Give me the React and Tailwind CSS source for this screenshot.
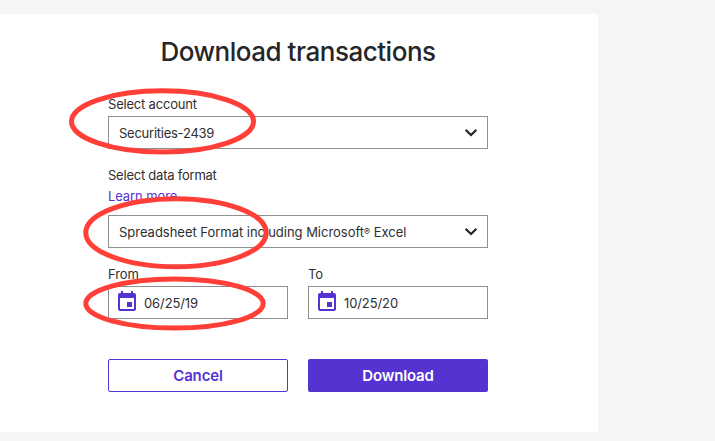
function Chevron() {
  return (
    <svg className="mr-[10px] h-3 w-3" viewBox="0 0 12 12" fill="none" stroke="#262629" strokeWidth="2.1">
      <path d="M0.6 2.8L6 8.1L11.4 2.8" />
    </svg>
  );
}

function CalendarIcon() {
  return (
    <svg className="h-6 w-6 shrink-0" viewBox="0 0 24 24" fill="#5533d1">
      <path d="M17 12h-5v5h5v-5zM16 1v2H8V1H6v2H5c-1.11 0-1.99.9-1.99 2L3 19c0 1.1.89 2 2 2h14c1.1 0 2-.9 2-2V5c0-1.1-.9-2-2-2h-1V1h-2zm3 18H5V8h14v11z" />
    </svg>
  );
}

function Select({ children }) {
  return (
    <div className="flex h-[33px] items-center justify-between border border-[#8f8f8f] pl-[10px]">
      <span className="whitespace-nowrap pt-0.5">{children}</span>
      <Chevron />
    </div>
  );
}

function DateField({ label, value }) {
  return (
    <div className="w-[180px]">
      <div className="h-[18px] leading-[18px] tracking-[-0.1px]">{label}</div>
      <div className="mt-[3px] flex h-[33px] items-center border border-[#8f8f8f] pl-[6px]">
        <div className="-mt-px">
          <CalendarIcon />
        </div>
        <span className="ml-[5px] pt-0.5 tracking-[-0.1px]">{value}</span>
      </div>
    </div>
  );
}

function Highlights() {
  return (
    <svg
      className="pointer-events-none absolute left-0 top-0 h-[441px] w-[715px]"
      viewBox="0 0 715 441"
      fill="none"
      stroke="#ff3f38"
      strokeWidth="5"
    >
      <ellipse cx="162.5" cy="121.4" rx="91" ry="30.6" />
      <ellipse cx="176" cy="232.7" rx="90.2" ry="34" />
      <ellipse cx="174.5" cy="303.5" rx="88.7" ry="24.6" />
    </svg>
  );
}

export default function App() {
  return (
    <div className="relative h-[441px] w-[715px] overflow-hidden bg-[#f5f5f5] pt-[14px] font-['Inter','Liberation_Sans',sans-serif] text-[13px] text-[#2e2e30]">
      <main className="h-[418px] w-[598px] bg-white pl-[108px] pt-[20px]">
        <div className="w-[380px]">
          <h1 className="h-9 whitespace-nowrap text-center text-[26px] font-medium leading-9 tracking-[-0.48px] text-[#262628]">
            Download transactions
          </h1>
          <div className="mt-[25px] h-[18px] leading-[18px] tracking-[-0.2px]">Select account</div>
          <div className="mt-[3px] tracking-[-0.25px]">
            <Select>Securities-2439</Select>
          </div>
          <div className="mt-[17px] h-[18px] leading-[18px] tracking-[-0.23px]">Select data format</div>
          <div className="mt-[3px] h-[18px] leading-[18px] tracking-[-0.1px] text-[#5533d1]">Learn more</div>
          <div className="mt-[10px] tracking-[-0.02px]">
            <Select>
              Spreadsheet Format including Microsoft
              <span className="relative -top-[2px] text-[9px]">®</span> Excel
            </Select>
          </div>
          <div className="mt-[17px] flex gap-5">
            <DateField label="From" value="06/25/19" />
            <DateField label="To" value="10/25/20" />
          </div>
          <div className="mt-10 flex gap-5 text-[15px] font-semibold tracking-[-0.15px]">
            <button className="h-[33px] w-[180px] rounded-[2px] border border-[#5533d1] pt-px text-[#5533d1]">
              Cancel
            </button>
            <button className="h-[33px] w-[180px] rounded-[2px] bg-[#5533d1] pt-px text-white">Download</button>
          </div>
        </div>
      </main>
      <Highlights />
    </div>
  );
}
